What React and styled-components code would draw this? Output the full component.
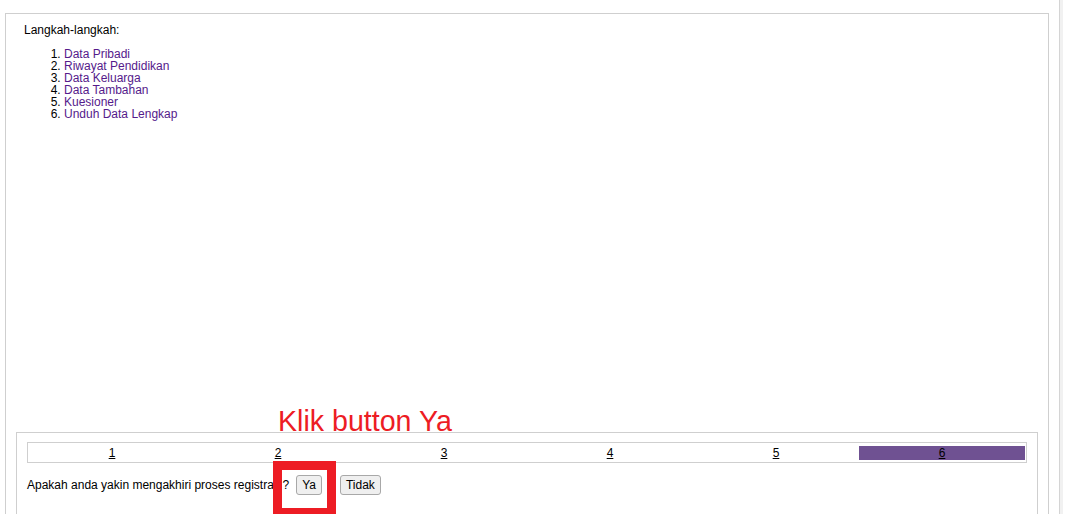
import React from "react";
import styled, { createGlobalStyle } from "styled-components";

const GlobalStyle = createGlobalStyle`
  html, body { margin: 0; padding: 0; background: #fff; }
  body {
    font-family: "Liberation Sans", Arial, sans-serif;
    font-size: 12px;
    color: #000;
    overflow: hidden;
  }
  * { box-sizing: border-box; }
`;

const Page = styled.div`
  position: relative;
  display: flex;
  height: 514px;
  padding-left: 5px;
  overflow: hidden;
`;

const Frame = styled.div`
  width: 1044px;
  margin-top: 13px;
  height: 560px;
  border: 1px solid #cfcfcf;
  padding: 0 10px;
  flex-shrink: 0;
`;

const ScrollEdge = styled.div`
  margin-left: 10px;
  width: 4px;
  border-left: 1px solid #d4d4d4;
  background: #f1f1f1;
`;

const Steps = styled.div`
  height: 418px;
  padding: 9px 8px 0;
`;

const Heading = styled.div`
  line-height: 14px;
`;

const StepList = styled.ol`
  margin: 11px 0 0;
  padding-left: 40px;
  line-height: 12px;
`;

const StepItem = styled.li`
  a {
    color: #551a8b;
    text-decoration: none;
  }
`;

const Panel = styled.div`
  border: 1px solid #cfcfcf;
  height: 200px;
  padding: 9px 10px 0;
`;

const Tabs = styled.div`
  display: grid;
  grid-template-columns: repeat(6, 1fr);
  border: 1px solid #cfcfcf;
  padding: 3px 1px 1px;
  height: 21px;
`;

const Tab = styled.a`
  display: block;
  height: 14px;
  line-height: 14px;
  text-align: center;
  color: #000;
  text-decoration: underline;
  background: ${(p) => (p.$active ? "#6f5192" : "transparent")};
`;

const Question = styled.div`
  display: flex;
  align-items: center;
  margin-top: 12px;
  line-height: 14px;
`;

const Mark = styled.span`
  position: relative;
  z-index: 2;
`;

const Button = styled.button`
  position: relative;
  z-index: 2;
  font-family: "Liberation Sans", Arial, sans-serif;
  font-size: 12px;
  height: 20px;
  padding: 0 5px;
  margin-left: ${(p) => p.$gap}px;
  border: 1px solid #a8a8a8;
  border-radius: 3px;
  background: #efefef;
  color: #000;
`;

const Callout = styled.div`
  position: absolute;
  left: 278px;
  top: 407px;
  font-family: "Liberation Sans", Arial, sans-serif;
  font-size: 28.6px;
  line-height: 28px;
  color: #ed1c24;
  white-space: nowrap;
`;

const Highlight = styled.div`
  position: absolute;
  z-index: 1;
  left: 273px;
  top: 461px;
  width: 63px;
  height: 56px;
  border: 9px solid #ed1c24;
  background: #fff;
`;

const steps = [
  "Data Pribadi",
  "Riwayat Pendidikan",
  "Data Keluarga",
  "Data Tambahan",
  "Kuesioner",
  "Unduh Data Lengkap",
];

export default function App() {
  return (
    <>
      <GlobalStyle />
      <Page>
        <Frame>
          <Steps>
            <Heading>Langkah-langkah:</Heading>
            <StepList>
              {steps.map((s) => (
                <StepItem key={s}>
                  <a href="#">{s}</a>
                </StepItem>
              ))}
            </StepList>
          </Steps>
          <Panel>
            <Tabs>
              {[1, 2, 3, 4, 5, 6].map((n) => (
                <Tab key={n} href="#" $active={n === 6}>
                  {n}
                </Tab>
              ))}
            </Tabs>
            <Question>
              <span>Apakah anda yakin mengakhiri proses registrasi</span>
              <Mark>?</Mark>
              <Button $gap={7}>Ya</Button>
              <Button $gap={18}>Tidak</Button>
            </Question>
          </Panel>
        </Frame>
        <ScrollEdge />
        <Callout>Klik button Ya</Callout>
        <Highlight />
      </Page>
    </>
  );
}
